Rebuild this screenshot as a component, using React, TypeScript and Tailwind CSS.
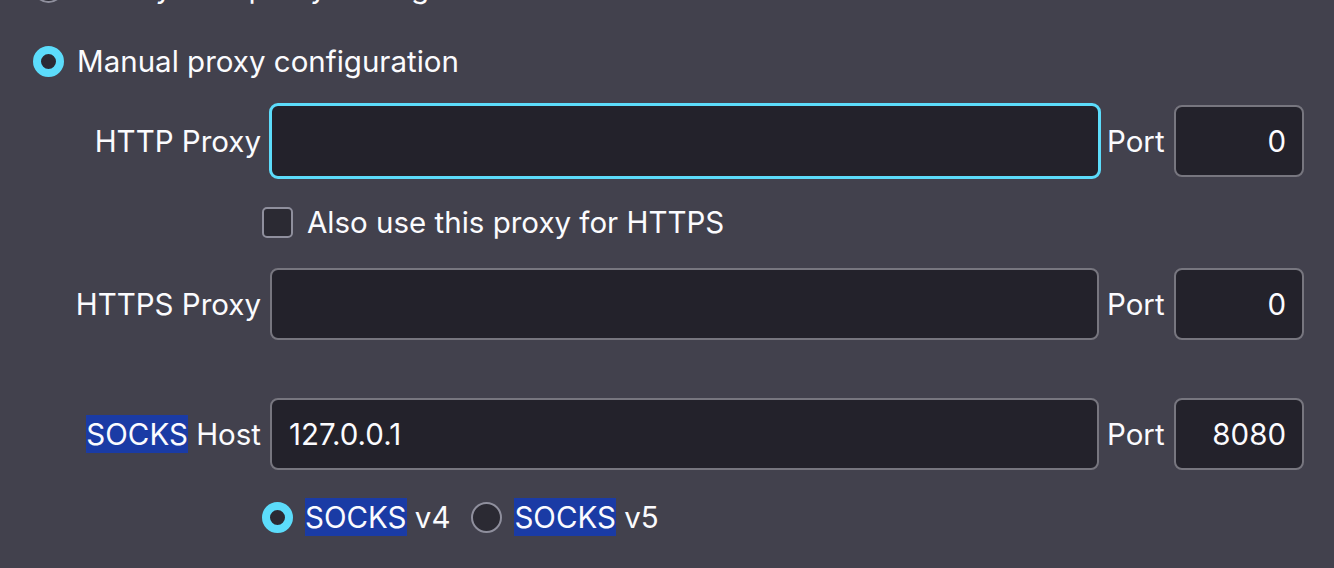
import React from 'react';

const Radio = ({ checked }: { checked?: boolean }) =>
    checked ? (
        <span className="block w-[31px] h-[31px] rounded-full border-[8px] border-[#5cdcfb] bg-[#2b2a33] shrink-0" />
    ) : (
        <span className="block w-[31px] h-[31px] rounded-full border-2 border-[#8f8f9d] bg-[#2b2a33] shrink-0" />
    );

const Hl = ({ children }: { children: React.ReactNode }) => (
    <span className="bg-[#1a3ba5] py-[1px]">{children}</span>
);

function Row({ label, value, port, focused }: { label: React.ReactNode; value?: string; port: string; focused?: boolean }) {
    return (
        <div className="flex items-center h-[72px]">
            <div className="w-[261px] text-right shrink-0 whitespace-nowrap">{label}</div>
            <div
                className={
                    focused
                        ? 'ml-[8px] w-[832px] h-[76px] rounded-[9px] border-[3px] border-[#5cdcfb] bg-[#23222b] shrink-0'
                        : 'ml-[9px] mr-[2px] w-[829px] h-[72px] rounded-[8px] border-2 border-[#77767f] bg-[#23222b] flex items-center pl-[17px] shrink-0'
                }
            >
                {value}
            </div>
            <div className="ml-[6px] w-[59px] shrink-0">Port</div>
            <div className="ml-[8px] w-[130px] h-[72px] rounded-[8px] border-2 border-[#77767f] bg-[#23222b] flex items-center justify-end pr-[16px] shrink-0">
                {port}
            </div>
        </div>
    );
}

export default function App() {
    return (
        <div
            className="w-[1334px] h-[568px] overflow-hidden bg-[#42414d] text-[#fbfbfe] text-[29.5px]"
            style={{ fontFamily: 'Inter, "Noto Sans", sans-serif' }}
        >
            <div className="flex items-center gap-[13px] h-[34px] mt-[-30px] pl-[33px]">
                <Radio />
                <span>Use system proxy settings</span>
            </div>
            <div className="flex items-center gap-[13px] h-[34px] mt-[40px] pl-[33px]">
                <Radio checked />
                <span>Manual proxy configuration</span>
            </div>
            <div className="mt-[27px]">
                <Row label="HTTP Proxy" port="0" focused />
            </div>
            <div className="flex items-center gap-[14px] h-[34px] mt-[28px] pl-[262px]">
                <span className="block w-[31px] h-[31px] rounded-[5px] border-2 border-[#8f8f9d] bg-[#2b2a33] shrink-0" />
                <span>Also use this proxy for HTTPS</span>
            </div>
            <div className="mt-[29px]">
                <Row label="HTTPS Proxy" port="0" />
            </div>
            <div className="mt-[58px]">
                <Row
                    label={
                        <>
                            <Hl>SOCKS</Hl> Host
                        </>
                    }
                    value="127.0.0.1"
                    port="8080"
                />
            </div>
            <div className="flex items-center h-[34px] mt-[30px] pl-[262px]">
                <Radio checked />
                <span className="ml-[12px]">
                    <Hl>SOCKS</Hl> v4
                </span>
                <span className="ml-[21px]">
                    <Radio />
                </span>
                <span className="ml-[12px]">
                    <Hl>SOCKS</Hl> v5
                </span>
            </div>
        </div>
    );
}
